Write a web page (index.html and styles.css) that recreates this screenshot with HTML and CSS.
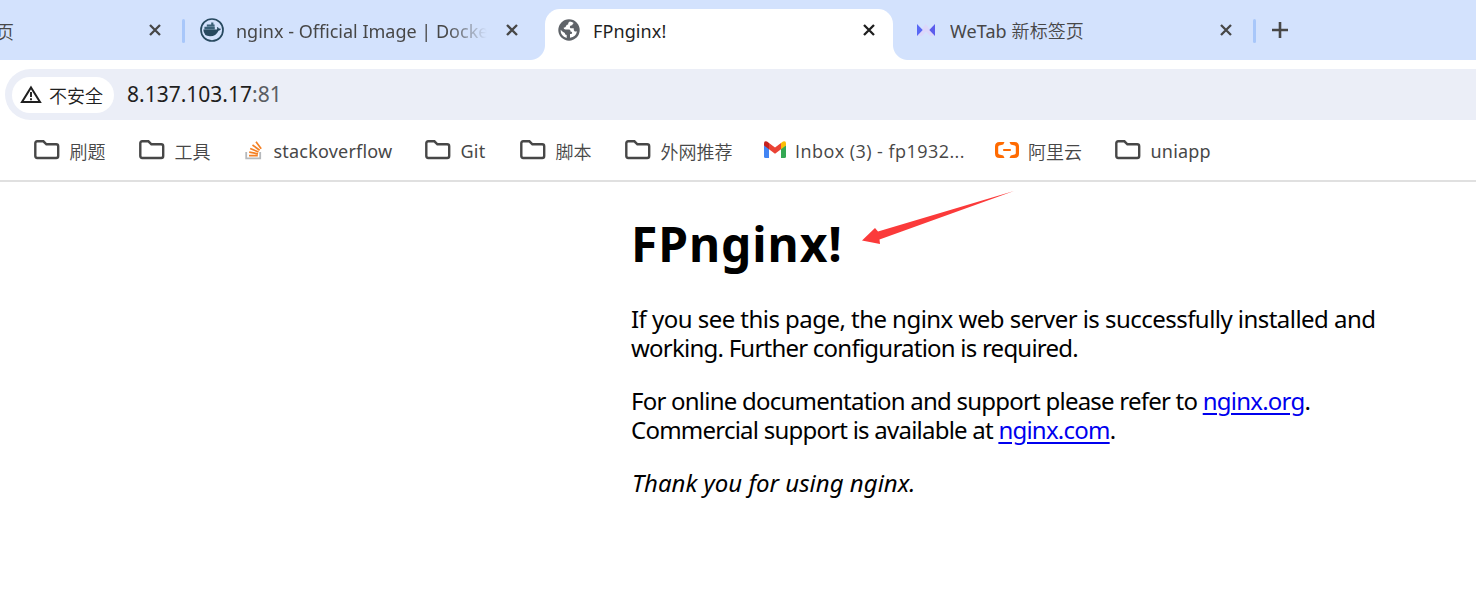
FILE: index.html
```html
<!DOCTYPE html>
<html lang="zh-CN">

<head>
    <meta charset="utf-8">
    <title>FPnginx!</title>
    <link rel="stylesheet" href="styles.css">
</head>

<body>

    <!-- shared icons -->
    <svg class="sprite">
        <symbol id="close" viewBox="0 0 12 12">
            <path d="M1 1L11 11M11 1L1 11" fill="none" stroke="currentColor" stroke-width="2.3" />
        </symbol>
        <symbol id="folder" viewBox="0 0 26 20">
            <path d="M3.2 1.3H9.4L12.4 4.3H22.2Q24.2 4.3 24.2 6.3V16Q24.2 18 22.2 18H3.2Q1.3 18 1.3 16V3.2Q1.3 1.3 3.2 1.3Z" fill="none" stroke="#474747" stroke-width="2.4" />
        </symbol>
    </svg>

    <div class="tabs">
        <div class="tab tab-first">
            <span class="tab-title cjk">页</span>
            <svg class="close"><use href="#close" /></svg>
        </div>
        <i class="divider"></i>
        <div class="tab tab-docker">
            <svg class="tab-icon" viewBox="0 0 24 24">
                <circle cx="12" cy="12" r="11" fill="none" stroke="#27495f" stroke-width="1.7" />
                <path d="M3.3 11.5H16.9Q17.5 10.8 16.9 9.1Q18.5 9.3 18.9 10.5Q20.5 10.2 21 11Q20.2 12.6 18.5 12.7Q16 18.2 10 18.2Q3.6 18.2 3.3 11.5Z" fill="#27495f" />
                <path d="M4.4 8.8H14.8V11.4H4.4ZM6.8 6.6H14.6V8.6H6.8ZM11.2 4.5H13.4V6.6H11.2Z" fill="#3a6078" />
            </svg>
            <span class="tab-title fade">nginx - Official Image | Docker</span>
            <svg class="close"><use href="#close" /></svg>
        </div>
        <div class="tab tab-active">
            <svg class="tab-icon" viewBox="0 0 22 22">
                <circle cx="11" cy="11" r="10.7" fill="#5f6368" />
                <path d="M11.8 2.6Q9.8 3.5 10.1 5.6Q8.2 5.5 8 7.2Q7.7 8.5 5.6 8.7Q5.6 10.4 7.5 10.4H11.2Q12.6 10.6 12.5 12.4Q14.7 12.5 14.1 14.2Q13.8 15 12 15.1V18.8Q18 17.8 19 12.2Q17.6 12.9 16.5 12.2Q15.6 11.6 15.7 9.2H12.5Q11.5 8.8 12 7.2Q12.5 6.2 14.2 6.2Q14.5 4.5 15.7 3.9Q13.9 2.7 11.8 2.6ZM2.6 10.7Q2.4 16.8 8.7 19.1V16Q6.8 15.7 6.8 13.9Q4.8 13 2.6 10.7Z" fill="#fff" />
            </svg>
            <span class="tab-title">FPnginx!</span>
            <svg class="close"><use href="#close" /></svg>
        </div>
        <div class="tab tab-wetab">
            <svg class="tab-icon" viewBox="0 0 20 14">
                <path d="M1 13L9.7 1L19 13H14L10 8.5L6 13Z" fill="#dcd7fa" />
                <path d="M1 1L6.7 7L1 13Z" fill="#5868f5" />
                <path d="M19 1L13.3 7L19 13Z" fill="#5c5cec" />
            </svg>
            <span class="tab-title">WeTab <span class="cjk">新标签页</span></span>
            <svg class="close"><use href="#close" /></svg>
        </div>
        <i class="divider"></i>
        <svg class="plus" viewBox="0 0 16 16">
            <path d="M8 0V16M0 8H16" stroke="#474747" stroke-width="2.6" />
        </svg>
    </div>

    <div class="toolbar">
        <div class="address">
            <div class="chip">
                <svg class="warning" viewBox="0 0 22 19">
                    <path d="M11 2.4L20 17H2Z" fill="none" stroke="#1f1f1f" stroke-width="2" />
                    <path d="M11 7V12M11 13.3V15.3" stroke="#1f1f1f" stroke-width="1.9" />
                </svg>
                <span class="cjk">不安全</span>
            </div>
            <div class="url">8.137.103.17<span>:81</span></div>
        </div>
    </div>

    <div class="bookmarks">
        <div class="bookmark w105"><svg class="folder"><use href="#folder" /></svg><span class="cjk">刷题</span></div>
        <div class="bookmark w106"><svg class="folder"><use href="#folder" /></svg><span class="cjk">工具</span></div>
        <div class="bookmark w180">
            <svg class="stack" viewBox="0 0 18 20">
                <path d="M1.2 12V18.3H15.2V12" fill="none" stroke="#b6b9bc" stroke-width="1.8" />
                <path d="M4 15.6H12.8M4.2 12.1L13 13.8M5.2 8.5L13.5 12M7.5 5L14.6 10.2M11 1.8L16.2 8.8" stroke="#f48024" stroke-width="1.7" />
            </svg>
            <span>stackoverflow</span>
        </div>
        <div class="bookmark w95"><svg class="folder"><use href="#folder" /></svg><span>Git</span></div>
        <div class="bookmark w105"><svg class="folder"><use href="#folder" /></svg><span class="cjk">脚本</span></div>
        <div class="bookmark w139"><svg class="folder"><use href="#folder" /></svg><span class="cjk">外网推荐</span></div>
        <div class="bookmark w231">
            <svg class="gmail" viewBox="0 0 22 17">
                <path d="M0 4L5 7V17H1.5Q0 17 0 15.5Z" fill="#4285f4" />
                <path d="M22 4L17 7V17H20.5Q22 17 22 15.5Z" fill="#34a853" />
                <path d="M17 2L19 .6Q22 -.6 22 2.5V4.5L17 8.2Z" fill="#fbbc04" />
                <path d="M5 2L11 6.5L17 2V8.2L11 12.7L5 8.2Z" fill="#ea4335" />
                <path d="M5 2L3 .6Q0 -.6 0 2.5V4.5L5 8.2Z" fill="#c5221f" />
            </svg>
            <span class="latin">Inbox (3) - fp1932...</span>
        </div>
        <div class="bookmark w120">
            <svg class="aliyun" viewBox="0 0 24 16">
                <path d="M9.5 0L8.3 2.5L4.3 3.5Q3.2 3.8 3.2 5V11Q3.2 12.2 4.3 12.5L8.3 13.5L9.5 16H4.5Q0 16 0 11.5V4.5Q0 0 4.5 0ZM14.5 0L15.7 2.5L19.7 3.5Q20.8 3.8 20.8 5V11Q20.8 12.2 19.7 12.5L15.7 13.5L14.5 16H19.5Q24 16 24 11.5V4.5Q24 0 19.5 0ZM8.2 7H15.8V9H8.2Z" fill="#ff6a00" />
            </svg>
            <span class="cjk">阿里云</span>
        </div>
        <div class="bookmark"><svg class="folder"><use href="#folder" /></svg><span>uniapp</span></div>
    </div>

    <div class="page">
        <h1>FPnginx!</h1>
        <p class="intro">If you see this page, the nginx web server is successfully installed and<br>
            <span>working. Further configuration is required.</span></p>
        <p>For online documentation and support please refer to <a href="#">nginx.org</a>.<br>
            Commercial support is available at <a href="#">nginx.com</a>.</p>
        <p><em>Thank you for using nginx.</em></p>
        <svg class="arrow" viewBox="0 0 152 54">
            <path d="M152 0L16 40.5L13 37L0 49.5L18 53L17.500 48.500Z" fill="#fb3a3a" />
        </svg>
    </div>

</body>

</html>
```
FILE: styles.css
```css
body {
    margin: 0;
    background: #fff;
    font-family: "Noto Sans", "Noto Sans CJK SC", sans-serif;
    font-size: 18px;
    color: #474747;
    overflow: hidden;
}

.sprite {
    display: none;
}

svg {
    flex: none;
    display: block;
}

.cjk {
    font-family: "Noto Sans CJK SC", sans-serif;
    font-weight: 350;
}

.tabs {
    display: flex;
    height: 60px;
    background: #d3e2fd;
}

.tab {
    box-sizing: border-box;
    display: flex;
    align-items: center;
    height: 60px;
    white-space: nowrap;
}

.tab-title {
    flex: 1;
    line-height: 28px;
    padding-top: 1px;
    letter-spacing: 0.1px;
    overflow: hidden;
}

.close {
    width: 12px;
    height: 12px;
}

.divider {
    flex: none;
    width: 3px;
    height: 24px;
    margin-top: 19px;
    border-radius: 2px;
    background: #a8c7fa;
}

.tab-first {
    width: 182px;
    padding-right: 21px;
}

.tab-first .tab-title {
    text-indent: -4px;
}

.tab-docker {
    width: 360px;
    padding: 0 27px 0 15px;
}

.tab-docker .tab-icon {
    width: 24px;
    height: 24px;
    margin-right: 12px;
}

.tab-docker .tab-title {
    margin-right: 19px;
    letter-spacing: 0;
}

.fade {
    -webkit-mask-image: linear-gradient(to right, #000 210px, transparent 251px);
    mask-image: linear-gradient(to right, #000 210px, transparent 251px);
}

.tab-active {
    position: relative;
    width: 348px;
    height: 51px;
    margin-top: 9px;
    padding: 0 18px 9px 13px;
    border-radius: 15px 15px 0 0;
    background: #fff;
    color: #1f1f1f;
}

/* outward curves at the foot of the active tab */
.tab-active::before,
.tab-active::after {
    content: "";
    position: absolute;
    bottom: 0;
    width: 15px;
    height: 15px;
}

.tab-active::before {
    left: -15px;
    background: radial-gradient(circle at 0 0, transparent 14.5px, #fff 15.5px);
}

.tab-active::after {
    right: -15px;
    background: radial-gradient(circle at 100% 0, transparent 14.5px, #fff 15.5px);
}

.tab-active .tab-icon {
    width: 22px;
    height: 22px;
    margin-right: 13px;
}

.tab-wetab {
    width: 360px;
    padding: 0 21px 0 23px;
}

.tab-wetab .tab-icon {
    width: 20px;
    height: 14px;
    margin-right: 14px;
}

.plus {
    width: 16px;
    height: 16px;
    margin: 22px 0 0 16px;
}

.toolbar {
    padding: 9px 0 0 5px;
}

.address {
    display: flex;
    align-items: center;
    height: 51px;
    border-radius: 26px 0 0 26px;
    background: #ebeef7;
}

.chip {
    box-sizing: border-box;
    display: flex;
    align-items: center;
    width: 102px;
    height: 36px;
    margin-left: 7px;
    padding-left: 8px;
    border-radius: 18px;
    background: #fff;
    color: #1f1f1f;
    white-space: nowrap;
}

.warning {
    width: 22px;
    height: 19px;
    margin-right: 7px;
}

.url {
    margin-left: 13px;
    padding-bottom: 2px;
    font-size: 21px;
    color: #1f1f1f;
}

.url span {
    color: #5a5d62;
}

.bookmarks {
    display: flex;
    align-items: center;
    height: 60px;
    padding-left: 33px;
    border-bottom: 2px solid #e0e0e0;
}

.bookmark {
    display: flex;
    align-items: center;
    letter-spacing: 0.2px;
    white-space: nowrap;
}

.bookmark span {
    padding-top: 2px;
}

.bookmark .cjk {
    padding-top: 1px;
    letter-spacing: 0;
}

.w95 { width: 95px; }
.w105 { width: 105px; }
.w106 { width: 106px; }
.w120 { width: 120px; }
.w139 { width: 139px; }
.w180 { width: 180px; }
.w231 { width: 231px; }

.folder {
    width: 26px;
    height: 20px;
    margin: 0 10px 0 0.5px;
}

.stack {
    width: 18px;
    height: 20px;
    margin: 0 10.5px 0 1px;
}

.gmail {
    width: 22px;
    height: 17px;
    margin: 0 9px 1px 1px;
}

.aliyun {
    width: 24px;
    height: 16px;
    margin: 0 9px 0 1px;
}

.bookmark .latin {
    font-family: "Open Sans", "Noto Sans", sans-serif;
    letter-spacing: 0.45px;
}

.page {
    position: relative;
    padding-left: 631px;
    font-size: 24px;
    line-height: 29px;
    color: #000;
    white-space: nowrap;
}

h1 {
    margin: 0;
    padding-top: 33px;
    font-size: 48px;
    line-height: 58px;
    letter-spacing: 0.9px;
}

p {
    margin: 0 0 24px;
    letter-spacing: -0.77px;
}

h1 + p {
    margin-top: 31px;
}

.intro {
    letter-spacing: -0.54px;
}

.intro span {
    letter-spacing: -0.77px;
}

em {
    padding-left: 1px;
    letter-spacing: 0;
}

a {
    color: #0000ee;
    text-underline-offset: 3px;
}

.arrow {
    position: absolute;
    left: 862px;
    top: 9px;
    width: 152px;
    height: 54px;
}
```
